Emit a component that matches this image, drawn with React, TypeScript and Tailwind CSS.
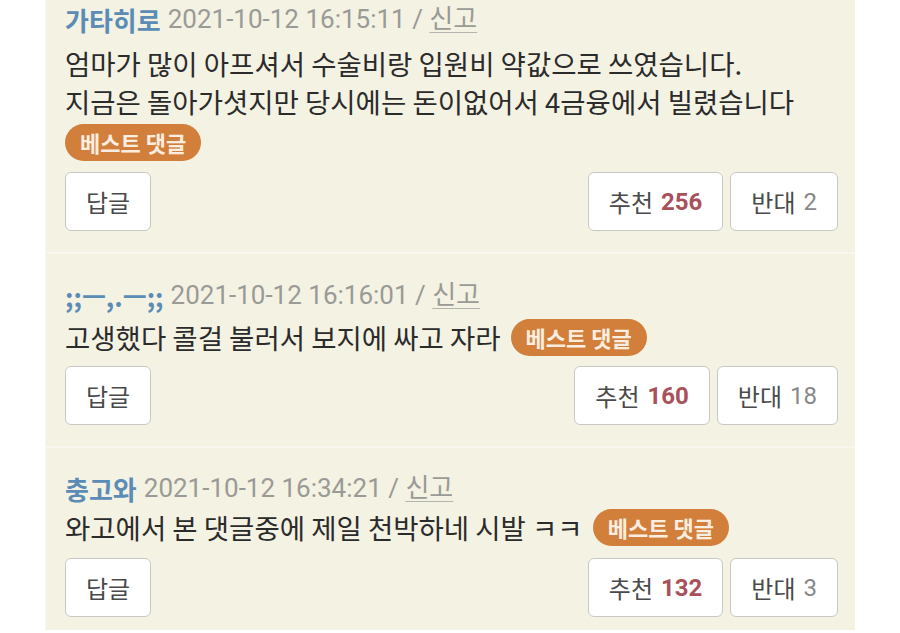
const font = { fontFamily: '"Noto Sans CJK KR", "Noto Sans", sans-serif' };

function Badge({ className = '' }: { className?: string }) {
    return (
        <span
            className={`inline-flex h-[37px] items-center rounded-full bg-[#d27f3b] px-[15px] text-[22px] font-bold text-[#fbeee0] ${className}`}
        >
            베스트 댓글
        </span>
    );
}

function Btn({ children }: { children: React.ReactNode }) {
    return (
        <button className="flex h-[59px] items-center rounded-[6px] border border-[#c9c9c4] bg-white px-[20px] text-[24px] text-[#4a4a4a]">
            {children}
        </button>
    );
}

function Header({ name, date }: { name: string; date: string }) {
    return (
        <div className="flex h-[38px] items-center gap-[7px] text-[26px]">
            <span className="font-bold text-[#5b8cb6]">{name}</span>
            <span className="text-[#9a9a96]" style={{ fontFamily: 'Roboto, "Noto Sans CJK KR", sans-serif' }}>
                {date} / <span className="underline decoration-1 underline-offset-4 decoration-[#b5b5b0]">신고</span>
            </span>
        </div>
    );
}

function Actions({ up, down }: { up: number; down: number }) {
    return (
        <div className="flex items-center justify-between">
            <Btn>답글</Btn>
            <div className="flex gap-[7px]">
                <Btn>
                    추천
                    <span className="ml-[8px] font-bold text-[#a8515b]" style={{ fontFamily: 'Roboto, sans-serif' }}>
                        {up}
                    </span>
                </Btn>
                <Btn>
                    반대
                    <span className="ml-[8px] text-[#888]" style={{ fontFamily: 'Roboto, sans-serif' }}>
                        {down}
                    </span>
                </Btn>
            </div>
        </div>
    );
}

export default function App() {
    return (
        <div className="h-[633px] w-[900px] overflow-hidden bg-white" style={font}>
            <div className="ml-[45px] w-[810px] border-l border-[#f8f7ef] bg-[#f4f2e3] pl-[19px] pr-[17px] text-[#2b2b2b]">
                {/* comment 1 */}
                <div className="pb-[21px]">
                    <Header name="가타히로" date="2021-10-12 16:15:11" />
                    <div className="mt-[6px] text-[27.5px] leading-[38px]">
                        <p>엄마가 많이 아프셔서 수술비랑 입원비 약값으로 쓰였습니다.</p>
                        <p>지금은 돌아가셧지만 당시에는 돈이없어서 4금융에서 빌렸습니다</p>
                    </div>
                    <div className="mt-[4px]">
                        <Badge />
                    </div>
                    <div className="mt-[11px]">
                        <Actions up={256} down={2} />
                    </div>
                </div>
                <div className="-ml-[19px] -mr-[17px] h-[2px] bg-[#f8f7ee]" />

                {/* comment 2 */}
                <div className="pb-[21px] pt-[22px]">
                    <Header name=";;ㅡ,.ㅡ;;" date="2021-10-12 16:16:01" />
                    <div className="mt-[4px] flex items-center text-[27.5px] leading-[38px]">
                        <span>고생했다 콜걸 불러서 보지에 싸고 자라</span>
                        <Badge className="ml-[10px]" />
                    </div>
                    <div className="mt-[10px]">
                        <Actions up={160} down={18} />
                    </div>
                </div>
                <div className="-ml-[19px] -mr-[17px] h-[2px] bg-[#f8f7ee]" />

                {/* comment 3 */}
                <div className="pb-[13px] pt-[21px]">
                    <Header name="충고와" date="2021-10-12 16:34:21" />
                    <div className="mt-[1px] flex items-center text-[27.5px] leading-[38px]">
                        <span>와고에서 본 댓글중에 제일 천박하네 시발 ㅋㅋ</span>
                        <Badge className="ml-[10px]" />
                    </div>
                    <div className="mt-[12px]">
                        <Actions up={132} down={3} />
                    </div>
                </div>
            </div>
        </div>
    );
}
